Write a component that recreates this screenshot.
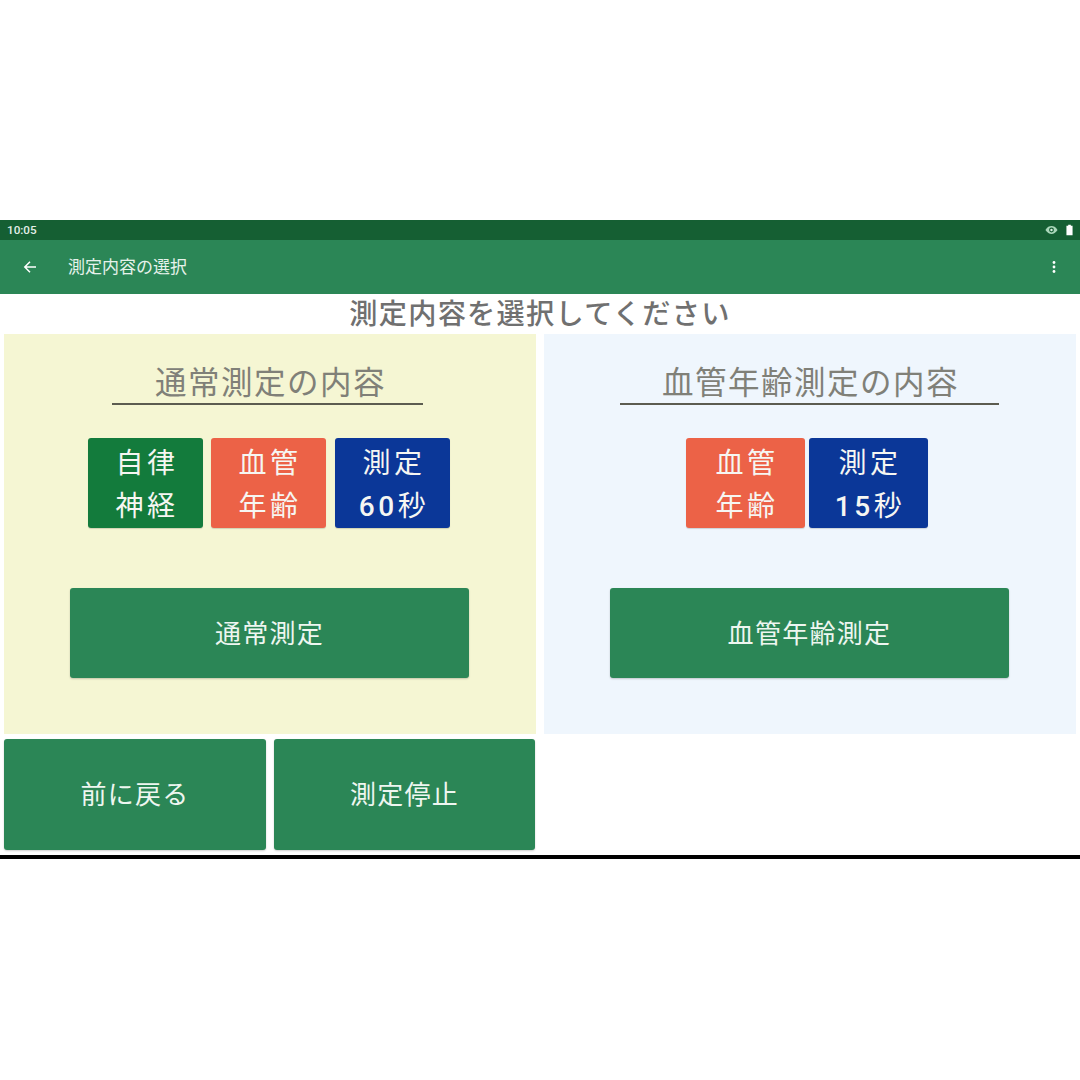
<div class="page">
  <div class="status">
    <span class="time">10:05</span>
    <span class="status-icons">
      <svg width="13" height="10" viewBox="0 0 14 10"><path d="M0.5 5C2.5 1.8 4.6 0.8 7 0.8S11.500 1.800 13.500 5C11.500 8.200 9.400 9.200 7 9.200S2.500 8.200 0.500 5Z" fill="#a9d6b9"/><circle cx="7" cy="5" r="2.600" fill="#155f33"/><circle cx="7" cy="5" r="1.300" fill="#d8efe0"/></svg>
      <svg width="7" height="12" viewBox="0 0 8 12"><path d="M2.500 0H5.500V1H7.500V12H0.500V1H2.500Z" fill="#fff"/></svg>
    </span>
  </div>
  <header class="appbar">
    <svg class="back" width="14" height="14" viewBox="0 0 14 14"><path d="M13 7H2M7 1.800L1.800 7L7 12.200" fill="none" stroke="#fff" stroke-width="1.500"/></svg>
    <span class="appbar-title">測定内容の選択</span>
    <svg class="more" width="4" height="14" viewBox="0 0 4 14"><circle cx="2" cy="2.500" r="1.400" fill="#fff"/><circle cx="2" cy="7" r="1.400" fill="#fff"/><circle cx="2" cy="11.500" r="1.400" fill="#fff"/></svg>
  </header>

  <h1>測定内容を選択してください</h1>

  <div class="panels">
    <section class="panel yellow">
      <h2 class="narrow">通常測定の内容</h2>
      <div class="tags wide-gap">
        <div class="tag green">自律<br />神経</div>
        <div class="tag red">血管<br />年齢</div>
        <div class="tag blue"><span>測定<br /><b>60</b>秒</span></div>
      </div>
      <button class="btn main">通常測定</button>
    </section>
    <section class="panel pale">
      <h2 class="wide">血管年齢測定の内容</h2>
      <div class="tags tight">
        <div class="tag red big">血管<br />年齢</div>
        <div class="tag blue big"><span>測定<br /><b>15</b>秒</span></div>
      </div>
      <button class="btn main">血管年齢測定</button>
    </section>
  </div>

  <div class="bottom">
    <button class="btn low">前に戻る</button>
    <button class="btn low">測定停止</button>
  </div>
  <div class="rule"></div>
</div>

<style>
  :global(body) {
    margin: 0;
    background: #fff;
  }
  .page {
    width: 1080px;
    height: 1080px;
    padding-top: 220px;
    box-sizing: border-box;
    font-family: "Roboto", "Noto Sans CJK JP", sans-serif;
    background: #fff;
  }
  .status {
    height: 20px;
    background: #155f33;
    display: flex;
    align-items: center;
    justify-content: space-between;
    padding: 0 7px;
    color: #e3f0e8;
    font-size: 11.700px;
    font-weight: 500;
  }
  .status-icons {
    display: flex;
    align-items: center;
    gap: 8px;
  }
  .appbar {
    height: 54px;
    background: #2b8656;
    display: flex;
    align-items: center;
    color: #e6f2eb;
    padding: 0 24px 0 23px;
  }
  .appbar-title {
    margin-left: 31px;
    flex: 1;
    font-size: 17px;
    line-height: 1;
  }
  h1 {
    margin: 0;
    height: 40px;
    line-height: 42px;
    text-align: center;
    font-size: 28.200px;
    letter-spacing: 1.300px;
    font-weight: 500;
    color: #707070;
  }
  .panels {
    display: grid;
    grid-template-columns: 532px 532px;
    gap: 8px;
    padding: 0 4px;
  }
  .panel {
    height: 400px;
    display: flex;
    flex-direction: column;
    align-items: center;
  }
  .yellow {
    background: #f5f6d3;
  }
  .pale {
    background: #eff6fd;
  }
  h2 {
    box-sizing: content-box;
    margin: 27px 0 0;
    height: 42px;
    line-height: 45px;
    font-size: 31.500px;
    letter-spacing: 1.500px;
    font-weight: 400;
    color: #808078;
    text-align: center;
    border-bottom: 2px solid #5c5c50;
  }
  .narrow {
    width: 305px;
    padding-left: 6px;
    margin-right: 5px;
  }
  .wide {
    width: 377px;
    padding-left: 2px;
    margin-right: 1px;
  }
  .tags {
    display: flex;
    margin-top: 33px;
  }
  .wide-gap {
    gap: 8px;
    margin-right: 2px;
  }
  .wide-gap .blue {
    margin-left: 1px;
  }
  .tight {
    gap: 4px;
    margin-right: 6px;
  }
  .tag {
    box-sizing: border-box;
    width: 115px;
    height: 90px;
    padding: 3px 0 0 3px;
    border-radius: 3px;
    color: #f6f6f2;
    font-size: 28px;
    line-height: 43px;
    letter-spacing: 3.500px;
    text-align: center;
    display: flex;
    align-items: center;
    justify-content: center;
    box-shadow: 0 1px 1px rgba(0, 0, 0, 0.15);
  }
  .tag b {
    font-weight: 500;
  }
  .tag.big {
    width: 119px;
  }
  .green {
    background: #137b3c;
  }
  .red {
    background: #ec6247;
  }
  .blue {
    background: #0b3798;
  }
  .btn {
    border: 0;
    border-radius: 3px;
    background: #2b8656;
    color: #eef6f0;
    font-family: inherit;
    font-size: 26px;
    letter-spacing: 1.300px;
    box-shadow: 0 1px 2px rgba(0, 0, 0, 0.2);
    padding: 0;
  }
  .main {
    width: 399px;
    height: 90px;
    margin-top: 60px;
    margin-right: 1px;
    padding-bottom: 3px;
  }
  .bottom {
    display: flex;
    gap: 8px;
    padding: 5px 0 0 4px;
  }
  .low {
    width: 262px;
    height: 111px;
    padding-bottom: 4px;
  }
  .low + .low {
    width: 261px;
  }
  .rule {
    height: 4px;
    background: #000;
    margin-top: 5px;
  }
</style>
